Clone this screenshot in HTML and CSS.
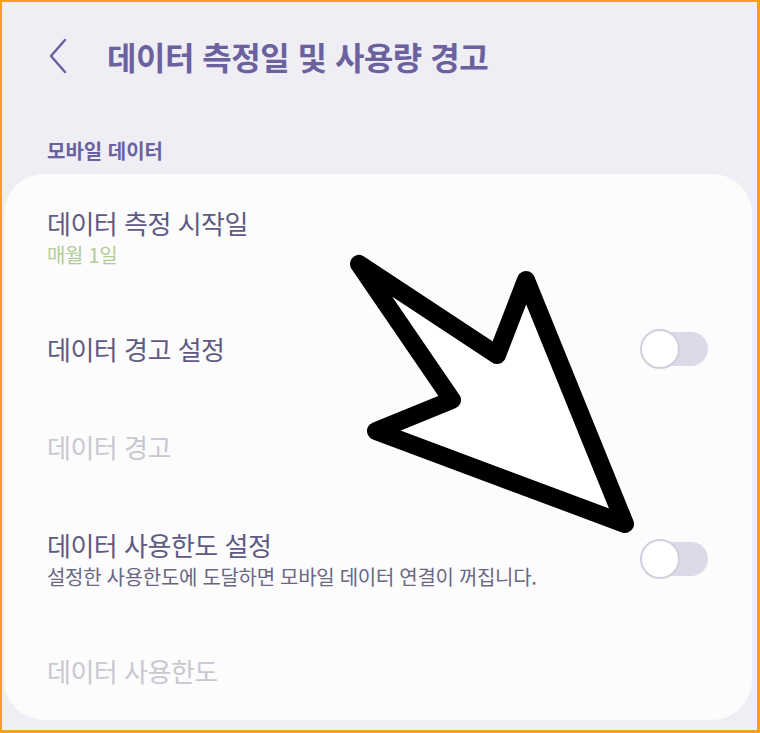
FILE: index.html
```html
<!DOCTYPE html>
<html lang="ko">
<head>
  <meta charset="UTF-8" />
  <meta name="viewport" content="width=device-width, initial-scale=1.0"/>
  <title>데이터 측정일 및 사용량 경고</title>
  <link rel="stylesheet" href="styles.css">
</head>
<body>
  <div class="frame">
    <header class="topbar">
      <svg class="back" width="20" height="36" viewBox="0 0 20 36">
        <path d="M17 2 L3 18 L17 34" fill="none" stroke="currentColor" stroke-width="2.5" stroke-linecap="round" stroke-linejoin="round"/>
      </svg>
      <h1>데이터 측정일 및 사용량 경고</h1>
    </header>

    <p class="section-label">모바일 데이터</p>

    <section class="card">
      <div class="row">
        <div class="text">
          <div class="title">데이터 측정 시작일</div>
          <div class="sub accent">매월 1일</div>
        </div>
      </div>

      <div class="row">
        <div class="text">
          <div class="title">데이터 경고 설정</div>
        </div>
        <div class="switch"><span class="knob"></span></div>
      </div>

      <div class="row">
        <div class="text">
          <div class="title disabled">데이터 경고</div>
        </div>
      </div>

      <div class="row">
        <div class="text">
          <div class="title">데이터 사용한도 설정</div>
          <div class="sub">설정한 사용한도에 도달하면 모바일 데이터 연결이 꺼집니다.</div>
        </div>
        <div class="switch"><span class="knob"></span></div>
      </div>

      <div class="row">
        <div class="text">
          <div class="title disabled">데이터 사용한도</div>
        </div>
      </div>
    </section>

    <!-- annotation arrow drawn over the screenshot -->
    <svg class="pointer" width="760" height="733" viewBox="0 0 760 733">
      <path d="M359 264 L497 355 L526 280 L625 524 L376 431 L452 400 Z" fill="#fff" stroke="#000" stroke-width="18" stroke-linejoin="round"/>
    </svg>
  </div>
</body>
</html>
```

FILE: styles.css
```css
:root {
  --bg: #efeef5;
  --card-bg: #fcfcfd;
  --heading: #6b619f;
  --text: #5f5a84;
  --muted: #6a6683;
  --disabled: #c9c7d0;
  --accent: #b1cd98;
  --frame: #f6a11c;
  --font: 'Noto Sans CJK KR', 'Noto Sans', sans-serif;
}

* {
  box-sizing: border-box;
}

body {
  margin: 0;
  font-family: var(--font);
  background-color: var(--bg);
}

.frame {
  position: relative;
  width: 760px;
  height: 733px;
  border: solid var(--frame);
  border-width: 2px 3px 3px 2px;
  background-color: var(--bg);
  overflow: hidden;
}

.topbar {
  display: flex;
  align-items: center;
  height: 82px;
  padding: 26px 0 0 46px;
}

.back {
  color: var(--heading);
  margin-right: 39px;
}

.topbar h1 {
  margin: 0;
  font-size: 32px;
  font-weight: 700;
  letter-spacing: -0.5px;
  color: var(--heading);
}

.section-label {
  margin: 54px 0 0 45px;
  font-size: 20px;
  font-weight: 700;
  line-height: 26px;
  color: var(--heading);
}

.card {
  margin: 10px 5px 0 2px;
  background-color: var(--card-bg);
  border-radius: 40px;
  padding: 0 44px 0 43px;
}

.row {
  display: flex;
  align-items: center;
  justify-content: space-between;
  padding: 32px 0;
}

.title {
  font-size: 26px;
  line-height: 34px;
  color: var(--text);
  letter-spacing: -0.5px;
}

.title.disabled {
  color: var(--disabled);
}

.sub {
  margin-top: 2px;
  font-size: 20px;
  line-height: 26px;
  color: var(--muted);
  letter-spacing: -0.3px;
}

.sub.accent {
  color: var(--accent);
}

.switch {
  display: flex;
  align-items: center;
  width: 63px;
  height: 34px;
  border-radius: 17px;
  background-color: #dcd9e9;
}

.knob {
  width: 40px;
  height: 40px;
  margin-left: -5px;
  border-radius: 50%;
  border: 2px solid #d2cfda;
  background-color: #fff;
}

.pointer {
  position: absolute;
  left: -2px;
  top: -2px;
  pointer-events: none;
}
```
